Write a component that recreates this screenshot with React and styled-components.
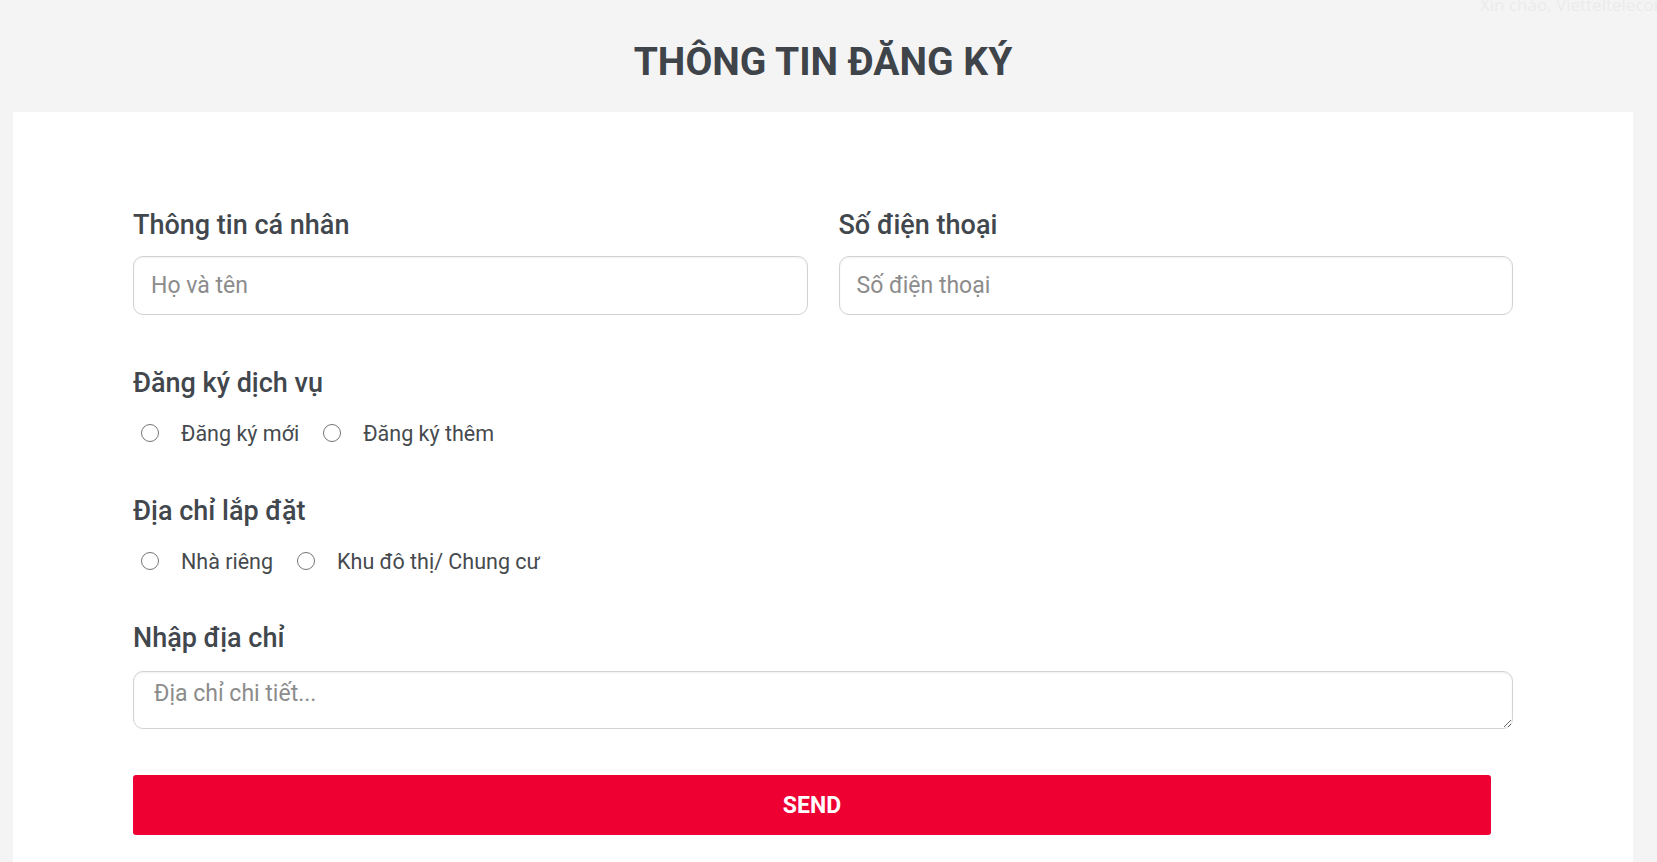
import React from 'react'
import styled, { createGlobalStyle } from 'styled-components';

const GlobalStyle = createGlobalStyle`
  html, body {
    margin: 0;
    padding: 0;
    background: #f4f4f4;
    font-family: Roboto, "Noto Sans", "Liberation Sans", sans-serif;
  }
  * { box-sizing: border-box; }
`;

const Page = styled.div`
  min-height: 862px;
  overflow: hidden;
`;

const Header = styled.div`
  position: relative;
  padding: 39px 24px 27px 13px;
  text-align: center;
`;

const Greeting = styled.span`
  position: absolute;
  top: -7px;
  left: 1480px;
  white-space: nowrap;
  font-family: "Open Sans", sans-serif;
  font-size: 17px;
  color: #ebebeb;
`;

const Title = styled.h1`
  margin: 0;
  font-size: 39px;
  line-height: 46px;
  font-weight: 700;
  color: #3e444a;
`;

const Card = styled.div`
  margin: 0 24px 0 13px;
  background: #fff;
  padding: 97px 120px 80px 120px;
`;

const Form = styled.form`
  display: flex;
  flex-direction: column;
`;

const Row = styled.div`
  display: grid;
  grid-template-columns: 1fr 1fr;
  column-gap: 31px;
`;

const Group = styled.div`
  display: flex;
  flex-direction: column;
  margin-top: ${({ $top }) => $top || 0}px;
`;

const Label = styled.label`
  font-size: 27px;
  line-height: 32px;
  font-weight: 500;
  color: #41474d;
  margin-bottom: ${({ $gap }) => $gap || 15}px;
`;

const Input = styled.input`
  height: 59px;
  width: 100%;
  border: 1px solid #d2d2d2;
  border-radius: 10px;
  box-shadow: inset 0 1px 2px rgba(0, 0, 0, 0.06);
  padding: 0 17px;
  font-family: inherit;
  font-size: 23px;
  color: #333;
  outline: none;
  &::placeholder { color: #8c8c8c; }
`;

const TextArea = styled.textarea`
  height: 58px;
  width: 100%;
  border: 1px solid #d2d2d2;
  border-radius: 10px;
  box-shadow: inset 0 1px 2px rgba(0, 0, 0, 0.06);
  padding: 8px 20px;
  font-family: inherit;
  font-size: 23px;
  line-height: 27px;
  color: #333;
  outline: none;
  &::placeholder { color: #8c8c8c; }
`;

const Options = styled.div`
  display: flex;
  align-items: center;
  height: 26px;
  padding-left: 8px;
`;

const Option = styled.label`
  display: flex;
  align-items: center;
  gap: 22px;
  margin-right: 24px;
  font-size: 21.5px;
  color: #464a4e;
  cursor: pointer;
`;

const Radio = styled.input.attrs({ type: 'radio' })`
  appearance: none;
  margin: 0;
  width: 18px;
  height: 18px;
  border: 1.5px solid #767676;
  border-radius: 50%;
  background: #fff;
  &:checked {
    border: 5px solid #0075ff;
  }
`;

const Send = styled.button`
  margin-top: 46px;
  margin-right: 22px;
  height: 60px;
  border: none;
  border-radius: 3px;
  background: #ee0033;
  color: #fff;
  font-family: inherit;
  font-size: 23px;
  font-weight: 700;
  cursor: pointer;
`;

const App = () => {
  return (
    <Page>
      <GlobalStyle />
      <Header>
        <Greeting>Xin chào, Vietteltelecom</Greeting>
        <Title>THÔNG TIN ĐĂNG KÝ</Title>
      </Header>
      <Card>
        <Form onSubmit={(e) => e.preventDefault()}>
          <Row>
            <Group>
              <Label>Thông tin cá nhân</Label>
              <Input placeholder="Họ và tên" />
            </Group>
            <Group>
              <Label>Số điện thoại</Label>
              <Input placeholder="Số điện thoại" />
            </Group>
          </Row>
          <Group $top={52}>
            <Label $gap={21}>Đăng ký dịch vụ</Label>
            <Options>
              <Option><Radio name="service" />Đăng ký mới</Option>
              <Option><Radio name="service" />Đăng ký thêm</Option>
            </Options>
          </Group>
          <Group $top={49}>
            <Label $gap={21}>Địa chỉ lắp đặt</Label>
            <Options>
              <Option><Radio name="place" />Nhà riêng</Option>
              <Option><Radio name="place" />Khu đô thị/ Chung cư</Option>
            </Options>
          </Group>
          <Group $top={48}>
            <Label $gap={17}>Nhập địa chỉ</Label>
            <TextArea placeholder="Địa chỉ chi tiết..." />
          </Group>
          <Send type="submit">SEND</Send>
        </Form>
      </Card>
    </Page>
  )
}

export default App;
